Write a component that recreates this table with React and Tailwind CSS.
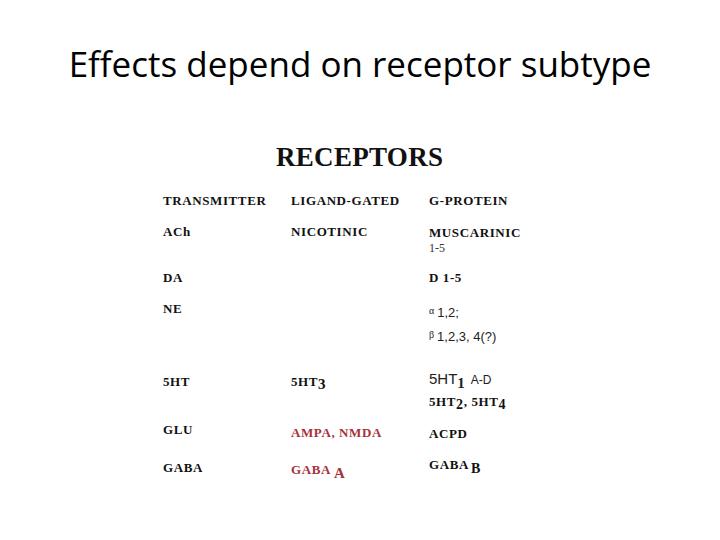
const serif = "block font-['Liberation_Serif',serif] font-bold text-[13px] leading-[16px] tracking-[0.6px] text-[#111]"
const sans = "font-['Liberation_Sans',Arial,sans-serif] text-[#222]"
const red = 'text-[#a8323a]'

function Row({ h, cells }) {
  return (
    <div className="grid grid-cols-[128px_138px_1fr] items-start" style={{ height: h }}>
      {cells.map((c, i) => (
        <div key={i}>{c}</div>
      ))}
    </div>
  )
}

export default function App() {
  return (
    <div className="w-[720px] h-[540px] bg-white overflow-hidden">
      <h1 className="pt-[40px] text-center font-['Open_Sans','Noto_Sans',sans-serif] text-[35px] leading-[48px] text-black">
        Effects depend on receptor subtype
      </h1>

      <div className="mt-[54px] pl-[276px] font-['Liberation_Serif',serif] font-bold text-[27px] leading-[30px] tracking-[0.3px] text-[#111]">
        RECEPTORS
      </div>

      <div className="mt-[21px] ml-[163px] w-[400px]">
        <Row
          h={31}
          cells={[
            <span className={serif}>TRANSMITTER</span>,
            <span className={serif}>LIGAND-GATED</span>,
            <span className={serif}>G-PROTEIN</span>,
          ]}
        />
        <Row
          h={46}
          cells={[
            <span className={serif}>ACh</span>,
            <span className={serif}>NICOTINIC</span>,
            <div className="flex flex-col pt-[1px]">
              <span className={serif}>MUSCARINIC</span>
              <span className="font-['Liberation_Serif',serif] text-[12px] leading-[15px] text-[#333]">1-5</span>
            </div>,
          ]}
        />
        <Row
          h={31}
          cells={[<span className={serif}>DA</span>, <span />, <span className={serif}>D 1-5</span>]}
        />
        <Row
          h={73}
          cells={[
            <span className={serif}>NE</span>,
            <span />,
            <div className={`flex flex-col ${sans} text-[13px] leading-[24px]`}>
              <span>
                <span className="font-['Liberation_Serif',serif] text-[10px] leading-none align-[3px] mr-[3px]">α</span>1,2;
              </span>
              <span>
                <span className="font-['Liberation_Serif',serif] text-[10px] leading-none align-[3px] mr-[3px]">β</span>1,2,3, 4(?)
              </span>
            </div>,
          ]}
        />
        <Row
          h={48}
          cells={[
            <span className={serif}>5HT</span>,
            <span className={serif}>
              5HT<span className="text-[15px] align-[-3px]">3</span>
            </span>,
            <div className="flex flex-col -mt-[5px]">
              <span className={`${sans} text-[15px] leading-[20px]`}>
                5HT<span className="font-['Liberation_Serif',serif] font-bold text-[15px] align-[-4px] mr-[6px]">1</span>
                <span className="text-[12px]">A-D</span>
              </span>
              <span className={`${serif} pt-[1px]`}>
                5HT<span className="text-[14px] align-[-3px]">2</span>, 5HT<span className="text-[14px] align-[-3px]">4</span>
              </span>
            </div>,
          ]}
        />
        <Row
          h={38}
          cells={[
            <span className={serif}>GLU</span>,
            <span className={`${serif} pt-[3px] ${red}`}>AMPA, NMDA</span>,
            <span className={`${serif} pt-[4px]`}>ACPD</span>,
          ]}
        />
        <Row
          h={30}
          cells={[
            <span className={serif}>GABA</span>,
            <span className={`${serif} pt-[2px] ${red}`}>
              GABA<span className="text-[15px] align-[-4px] ml-[3px]">A</span>
            </span>,
            <span className={`${serif} -mt-[3px]`}>
              GABA<span className="text-[14px] align-[-4px] ml-[2px]">B</span>
            </span>,
          ]}
        />
      </div>
    </div>
  )
}
